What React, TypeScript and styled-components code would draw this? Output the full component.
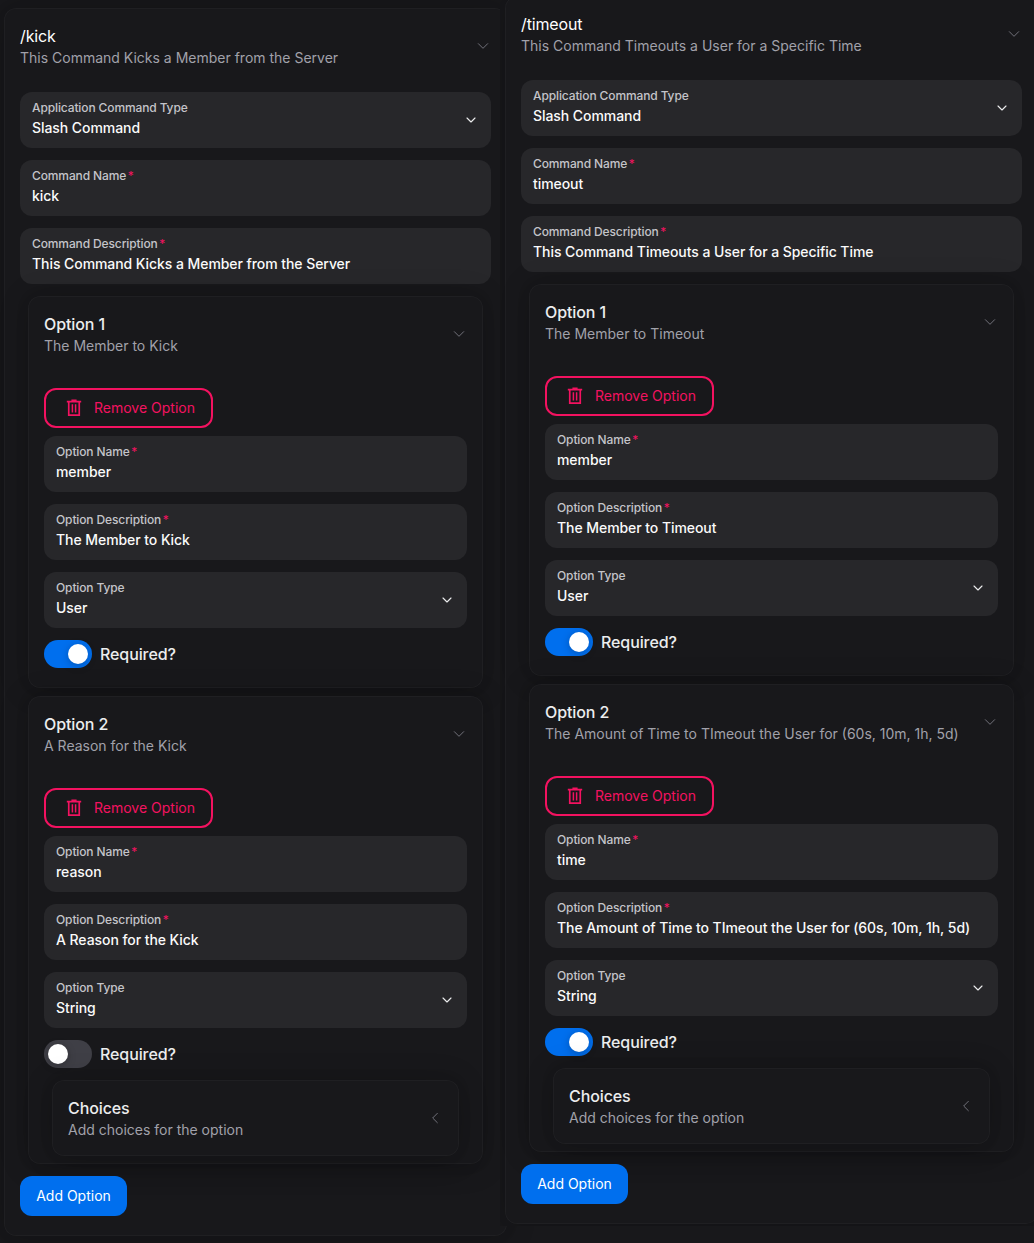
import React, { useState } from "react";
import styled, { createGlobalStyle } from "styled-components";

const GlobalStyle = createGlobalStyle`
  *, *::before, *::after { box-sizing: border-box; }
  html, body { margin: 0; background: #18181b; }
  body {
    overflow: hidden;
    font-family: Inter, "Liberation Sans", sans-serif;
    color: #ecedee;
    -webkit-font-smoothing: antialiased;
  }
  button { font: inherit; color: inherit; background: none; border: 0; padding: 0; cursor: pointer; }
`;

const Page = styled.main`
  display: grid;
  grid-template-columns: 500px 534px;
  align-items: start;
  width: 1034px;
  height: 1243px;
  overflow: hidden;
`;

const Pane = styled.section<{ $side: "left" | "right" }>`
  min-width: 0;
  height: ${(p) => (p.$side === "left" ? 1243 : 1226)}px;
  padding: ${(p) => (p.$side === "left" ? "8px 0 0 4px" : "0 0 0 5px")};
  ${(p) => p.$side === "right" && "overflow: hidden; background: #18181b; z-index: 1;"}
`;

const Card = styled.article<{ $width?: number; $lift?: number }>`
  width: ${(p) => (p.$width ? `${p.$width}px` : "auto")};
  margin-top: ${(p) => -(p.$lift ?? 0)}px;
  padding: 0 16px;
  border-radius: 12px;
  background: #18181b;
  box-shadow: 0 0 15px 0 rgb(0 0 0 / 0.06), 0 2px 30px 0 rgb(0 0 0 / 0.2),
    inset 0 0 0 1px rgb(255 255 255 / 0.032);
`;

const Trigger = styled.button`
  display: flex;
  align-items: center;
  gap: 12px;
  width: 100%;
  padding: 16px 0;
  text-align: left;
`;

const Heading = styled.span`
  display: flex;
  flex: 1;
  flex-direction: column;
  white-space: nowrap;
`;

const Title = styled.span`
  font-size: 16px;
  line-height: 24px;
  font-weight: 500;
  letter-spacing: -0.1px;
`;

const CommandTitle = styled(Title)`
  font-weight: 400;
  letter-spacing: -0.14px;
  color: #ffffff;
`;

const Subtitle = styled.span`
  font-size: 14px;
  line-height: 20px;
  color: #a1a1aa;
`;

const Body = styled.div`
  display: flex;
  flex-direction: column;
  align-items: flex-start;
  gap: 12px;
  padding: 8px 0 20px;
`;

const OptionBody = styled(Body)<{ $tight?: boolean }>`
  padding: 16px 0 ${(p) => (p.$tight ? 8 : 20)}px;
`;

const Options = styled.div`
  display: flex;
  flex-direction: column;
  gap: 8px;
  width: 100%;
  padding: 0 8px;
`;

const FieldBox = styled.label`
  display: flex;
  align-items: center;
  justify-content: space-between;
  width: 100%;
  height: 56px;
  padding: 0 12px;
  border-radius: 12px;
  background: #27272a;
`;

const FieldText = styled.span`
  display: flex;
  flex-direction: column;
  padding-bottom: 4px;
  white-space: nowrap;
`;

const Label = styled.span<{ $required?: boolean }>`
  font-size: 12px;
  line-height: 20px;
  font-weight: 500;
  letter-spacing: -0.12px;
  color: #c4c4c9;
  ${(p) =>
    p.$required &&
    `&::after { content: "*"; margin-left: 1.5px; font-weight: 400; color: #f31260; }`}
`;

const Value = styled.span`
  font-size: 14px;
  line-height: 20px;
  font-weight: 500;
  letter-spacing: -0.065px;
  color: #fafafa;
`;

const RemoveButton = styled.button`
  display: flex;
  align-items: center;
  gap: 10px;
  height: 40px;
  width: 169px;
  margin-bottom: -4px;
  padding: 0 16px 0 18px;
  border: 2px solid #f31260;
  border-radius: 12px;
  font-size: 14px;
  color: #f31260;
  white-space: nowrap;
`;

const ButtonLabel = styled.span`
  display: block;
  line-height: 20px;
  padding-bottom: 1px;
`;

const SwitchRow = styled.button`
  display: flex;
  align-items: center;
  gap: 8px;
  height: 28px;
  font-size: 16px;
  font-weight: 500;
  letter-spacing: -0.1px;
`;

const Track = styled.span<{ $on: boolean }>`
  display: flex;
  align-items: center;
  justify-content: ${(p) => (p.$on ? "flex-end" : "flex-start")};
  width: 48px;
  height: 28px;
  padding: 0 4px;
  border-radius: 14px;
  background: ${(p) => (p.$on ? "#006fee" : "#3f3f46")};
`;

const Thumb = styled.span`
  width: 20px;
  height: 20px;
  border-radius: 50%;
  background: #fff;
  box-shadow: 0 0 5px rgb(0 0 0 / 0.05), 0 2px 10px rgb(0 0 0 / 0.2);
`;

const AddButton = styled.button`
  display: flex;
  align-items: center;
  justify-content: center;
  width: 107px;
  height: 40px;
  border-radius: 12px;
  background: #006fee;
  color: #fff;
  font-size: 14px;
  white-space: nowrap;
`;

const Icon = styled.svg`
  flex: none;
  display: block;
  fill: none;
  stroke: currentColor;
`;

const Arrow = styled(Icon)<{ $open: boolean }>`
  color: #71717a;
  transform: rotate(${(p) => (p.$open ? -90 : 0)}deg);
`;

const AccordionArrow = ({ open }: { open: boolean }) => (
  <Arrow $open={open} width="16" height="16" viewBox="0 0 24 24" strokeWidth="1.5" strokeLinecap="round" strokeLinejoin="round">
    <path d="M15.5 19l-7-7 7-7" />
  </Arrow>
);

const SelectArrow = () => (
  <Icon width="16" height="16" viewBox="0 0 24 24" strokeWidth="1.7" strokeLinecap="round" strokeLinejoin="round">
    <path d="m6 9 6 6 6-6" />
  </Icon>
);

const TrashIcon = () => (
  <Icon width="20" height="20" viewBox="0 0 20 20" strokeWidth="1.6">
    <path d="M2.8 3.6h14.4M7.4 2.4h5.2" />
    <path d="M4.75 3.8v13.4h10.5V3.8" strokeWidth="1.7" />
    <path d="M8.4 6.2v8.2M11.6 6.2v8.2" strokeWidth="1.5" />
  </Icon>
);

interface FieldProps {
  label: string;
  value: string;
  select?: boolean;
}

const Field = ({ label, value, select }: FieldProps) => (
  <FieldBox>
    <FieldText>
      <Label $required={!select}>{label}</Label>
      <Value>{value}</Value>
    </FieldText>
    {select && <SelectArrow />}
  </FieldBox>
);

interface HeaderProps {
  title: string;
  subtitle: string;
  open?: boolean;
  command?: boolean;
}

const Header = ({ title, subtitle, open = true, command }: HeaderProps) => (
  <Trigger aria-expanded={open}>
    <Heading>
      {command ? <CommandTitle>{title}</CommandTitle> : <Title>{title}</Title>}
      <Subtitle>{subtitle}</Subtitle>
    </Heading>
    <AccordionArrow open={open} />
  </Trigger>
);

interface Option {
  name: string;
  description: string;
  type: string;
  required: boolean;
  choices?: boolean;
}

const OptionCard = ({ option, index }: { option: Option; index: number }) => {
  const [required, setRequired] = useState(option.required);
  return (
    <Card>
      <Header title={`Option ${index + 1}`} subtitle={option.description} />
      <OptionBody $tight={option.choices}>
        <RemoveButton>
          <TrashIcon />
          <ButtonLabel>Remove Option</ButtonLabel>
        </RemoveButton>
        <Field label="Option Name" value={option.name} />
        <Field label="Option Description" value={option.description} />
        <Field label="Option Type" value={option.type} select />
        <SwitchRow role="switch" aria-checked={required} onClick={() => setRequired(!required)}>
          <Track $on={required}>
            <Thumb />
          </Track>
          Required?
        </SwitchRow>
        {option.choices && (
          <Options>
            <Card>
              <Header title="Choices" subtitle="Add choices for the option" open={false} />
            </Card>
          </Options>
        )}
      </OptionBody>
    </Card>
  );
};

interface Command {
  name: string;
  description: string;
  options: Option[];
}

const CommandCard = ({ command, width, lift }: { command: Command; width: number; lift?: number }) => (
  <Card $width={width} $lift={lift}>
    <Header title={`/${command.name}`} subtitle={command.description} command />
    <Body>
      <Field label="Application Command Type" value="Slash Command" select />
      <Field label="Command Name" value={command.name} />
      <Field label="Command Description" value={command.description} />
      <Options>
        {command.options.map((option, index) => (
          <OptionCard key={option.name} option={option} index={index} />
        ))}
      </Options>
      <AddButton>
        <ButtonLabel>Add Option</ButtonLabel>
      </AddButton>
    </Body>
  </Card>
);

const kick: Command = {
  name: "kick",
  description: "This Command Kicks a Member from the Server",
  options: [
    { name: "member", description: "The Member to Kick", type: "User", required: true },
    { name: "reason", description: "A Reason for the Kick", type: "String", required: false, choices: true },
  ],
};

const timeout: Command = {
  name: "timeout",
  description: "This Command Timeouts a User for a Specific Time",
  options: [
    { name: "member", description: "The Member to Timeout", type: "User", required: true },
    {
      name: "time",
      description: "The Amount of Time to TImeout the User for (60s, 10m, 1h, 5d)",
      type: "String",
      required: true,
      choices: true,
    },
  ],
};

export default function App() {
  return (
    <>
      <GlobalStyle />
      <Page>
        <Pane $side="left">
          <CommandCard command={kick} width={503} />
        </Pane>
        <Pane $side="right">
          <CommandCard command={timeout} width={533} lift={4} />
        </Pane>
      </Page>
    </>
  );
}
